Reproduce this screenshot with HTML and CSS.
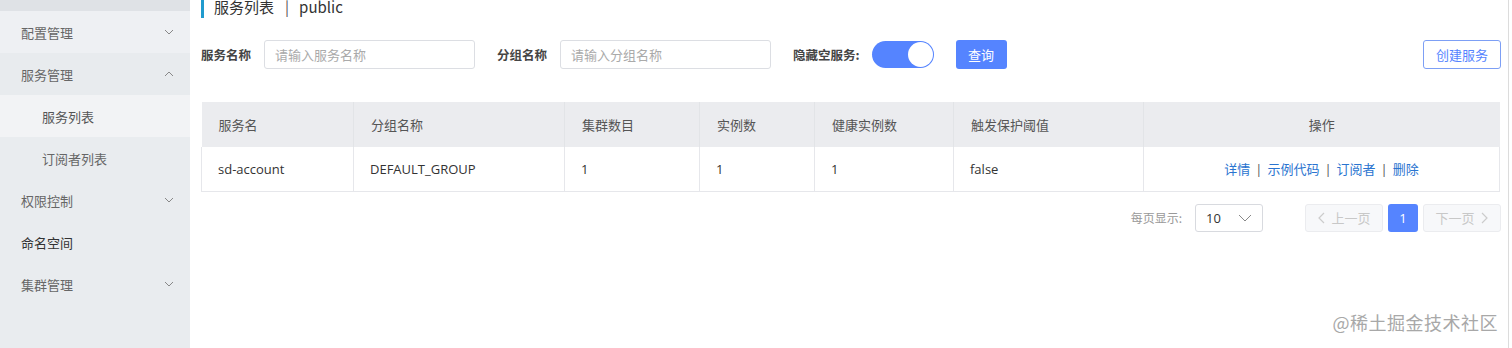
FILE: index.html
```html
<!DOCTYPE html>
<html lang="zh-CN">
<head>
<meta charset="utf-8">
<title>服务列表</title>
<link rel="stylesheet" href="styles.css">
</head>
<body>
<div class="app">
  <aside class="sidebar">
    <div class="menu-top"></div>
    <div class="menu-item hover">配置管理
      <svg class="chev" width="10" height="6" viewBox="0 0 10 6"><path d="M1 1l4 4 4-4" fill="none" stroke="#888" stroke-width="1"/></svg>
    </div>
    <div class="menu-item open">服务管理
      <svg class="chev" width="10" height="6" viewBox="0 0 10 6"><path d="M1 5l4-4 4 4" fill="none" stroke="#888" stroke-width="1"/></svg>
    </div>
    <div class="menu-item sub active">服务列表</div>
    <div class="menu-item sub">订阅者列表</div>
    <div class="menu-item">权限控制
      <svg class="chev" width="10" height="6" viewBox="0 0 10 6"><path d="M1 1l4 4 4-4" fill="none" stroke="#888" stroke-width="1"/></svg>
    </div>
    <div class="menu-item dark">命名空间</div>
    <div class="menu-item">集群管理
      <svg class="chev" width="10" height="6" viewBox="0 0 10 6"><path d="M1 1l4 4 4-4" fill="none" stroke="#888" stroke-width="1"/></svg>
    </div>
  </aside>
  <main class="main">
    <div class="page-title">服务列表<span class="t-sep">|</span>public</div>
    <div class="filters">
      <label class="f-label">服务名称</label>
      <div class="input w-name">请输入服务名称</div>
      <label class="f-label">分组名称</label>
      <div class="input w-name">请输入分组名称</div>
      <label class="f-label">隐藏空服务:</label>
      <div class="toggle"><span class="knob"></span></div>
      <button class="btn-primary">查询</button>
      <div class="spacer"></div>
      <button class="btn-outline">创建服务</button>
    </div>
    <table class="grid">
      <colgroup>
        <col style="width:152px"><col style="width:211px"><col style="width:135px"><col style="width:115px"><col style="width:139px"><col style="width:190px"><col>
      </colgroup>
      <thead>
        <tr><th>服务名</th><th>分组名称</th><th>集群数目</th><th>实例数</th><th>健康实例数</th><th>触发保护阈值</th><th class="center">操作</th></tr>
      </thead>
      <tbody>
        <tr>
          <td>sd-account</td><td>DEFAULT_GROUP</td><td>1</td><td>1</td><td>1</td><td>false</td>
          <td class="center ops"><a>详情</a><span class="sep">|</span><a>示例代码</a><span class="sep">|</span><a>订阅者</a><span class="sep">|</span><a>删除</a></td>
        </tr>
      </tbody>
    </table>
    <div class="pager">
      <span class="pg-label">每页显示:</span>
      <div class="select">10
        <svg width="14" height="8" viewBox="0 0 14 8"><path d="M1 1l6 6 6-6" fill="none" stroke="#888" stroke-width="1"/></svg>
      </div>
      <div class="pg-btn wide disabled"><svg width="8" height="12" viewBox="0 0 8 12"><path d="M7 1L2 6l5 5" fill="none" stroke="#ccc" stroke-width="1.2"/></svg>上一页</div>
      <div class="pg-btn current">1</div>
      <div class="pg-btn wide disabled">下一页<svg width="8" height="12" viewBox="0 0 8 12"><path d="M1 1l5 5-5 5" fill="none" stroke="#ccc" stroke-width="1.2"/></svg></div>
    </div>
    <div class="watermark">@稀土掘金技术社区</div>
  </main>
</div>
</body>
</html>
```
FILE: styles.css
```css
* { box-sizing: border-box; }
html, body { margin: 0; padding: 0; }
body {
  width: 1512px;
  height: 348px;
  overflow: hidden;
  background: #fff;
  font-family: "Noto Sans CJK SC", "Noto Sans", sans-serif;
  font-size: 13px;
  color: #333;
}
.app { display: flex; height: 348px; }

.sidebar {
  width: 190px;
  flex: none;
  background: #e9ecef;
  display: flex;
  flex-direction: column;
}
.menu-top { height: 11px; background: #dfe2e6; }
.menu-item {
  height: 42px;
  display: flex;
  align-items: center;
  padding-left: 21px;
  padding-right: 10px;
  color: #666;
  font-size: 13px;
  position: relative;
}
.menu-item.hover { background: #eef0f3; }
.menu-item.open { background: #e8ebee; }
.menu-item.sub { padding-left: 42px; }
.menu-item.active { background: #f2f3f5; color: #555; }
.menu-item.dark { color: #333; }
.chev { margin-left: auto; margin-right: 6px; }

.main {
  flex: 1;
  border-right: 1px solid #dcdcdc;
  margin-right: 3px;
  padding: 0 7px 0 11px;
  position: relative;
}
.page-title {
  margin-top: -2px;
  height: 20px;
  line-height: 18px;
  border-left: 3px solid #209bce;
  padding-left: 10px;
  font-size: 15px;
  color: #333;
}
.t-sep { margin: 0 10px 0 11px; color: #555; }
.filters {
  margin-top: 22px;
  height: 29px;
  display: flex;
  align-items: center;
}
.f-label {
  font-weight: bold;
  color: #444;
  font-size: 12.5px;
  margin-right: 13px;
}
.input {
  height: 29px;
  border: 1px solid #dcdee3;
  border-radius: 3px;
  color: #aaa;
  font-size: 13px;
  line-height: 27px;
  padding-left: 10px;
  margin-right: 22px;
}
.w-name { width: 211px; }
.toggle {
  width: 62px;
  height: 27px;
  border-radius: 14px;
  background: #5584ff;
  position: relative;
  margin-left: -1px;
  margin-right: 22px;
}
.knob {
  position: absolute;
  right: 1px;
  top: 1px;
  width: 25px;
  height: 25px;
  border-radius: 50%;
  background: #fff;
}
.btn-primary {
  width: 51px;
  height: 29px;
  border: none;
  border-radius: 3px;
  background: #5584ff;
  color: #fff;
  font-family: inherit;
  font-size: 13px;
  padding: 0;
}
.spacer { flex: 1; }
.btn-outline {
  width: 78px;
  height: 29px;
  border: 1px solid #7d9ff5;
  border-radius: 3px;
  background: #fff;
  color: #5584ff;
  font-family: inherit;
  font-size: 13px;
  padding: 0;
}

.grid {
  margin-top: 33px;
  width: 1299px;
  border-collapse: collapse;
  table-layout: fixed;
}
.grid th {
  height: 45px;
  background: #ebecef;
  font-weight: normal;
  color: #555;
  text-align: left;
  padding: 0 0 0 17px;
  border-right: 1px solid #e2e4e7;
  font-size: 13px;
}
.grid th:last-child { border-right: none; }
.grid td {
  height: 44px;
  padding: 0 0 0 16px;
  border-right: 1px solid #e6e7eb;
  border-bottom: 1px solid #e6e7eb;
  color: #333;
  font-family: "Open Sans", "Noto Sans CJK SC", sans-serif;
  font-size: 13px;
}
.grid td:first-child { border-left: 1px solid #e6e7eb; }
.grid .center { text-align: center; padding-left: 0; }
.ops a { color: #2a74d0; font-family: "Noto Sans CJK SC", sans-serif; }
.ops .sep { color: #555; margin: 0 5px; }

.pager {
  margin-top: 12px;
  height: 28px;
  display: flex;
  justify-content: flex-end;
  align-items: center;
}
.pg-label { color: #999; font-size: 12px; margin-right: 13px; }
.select {
  width: 68px;
  height: 28px;
  border: 1px solid #d8dadf;
  border-radius: 3px;
  display: flex;
  align-items: center;
  justify-content: space-between;
  padding: 0 10px 0 10px;
  font-family: "Open Sans", sans-serif;
  font-size: 13px;
  color: #333;
  margin-right: 42px;
}
.pg-btn {
  height: 28px;
  border-radius: 3px;
  display: flex;
  align-items: center;
  justify-content: center;
  font-size: 13px;
  gap: 6px;
}
.pg-btn.wide { width: 78px; }
.pg-btn.disabled { background: #f7f8fa; border: 1px solid #ebecef; color: #c8c8c8; }
.pg-btn.current { width: 30px; margin: 0 5px; background: #5584ff; color: #fff; font-family: "Open Sans", sans-serif; }

.watermark {
  position: absolute;
  right: 10px;
  bottom: 13px;
  font-size: 18px;
  color: #a8a8a8;
  letter-spacing: 0.5px;
}
```
